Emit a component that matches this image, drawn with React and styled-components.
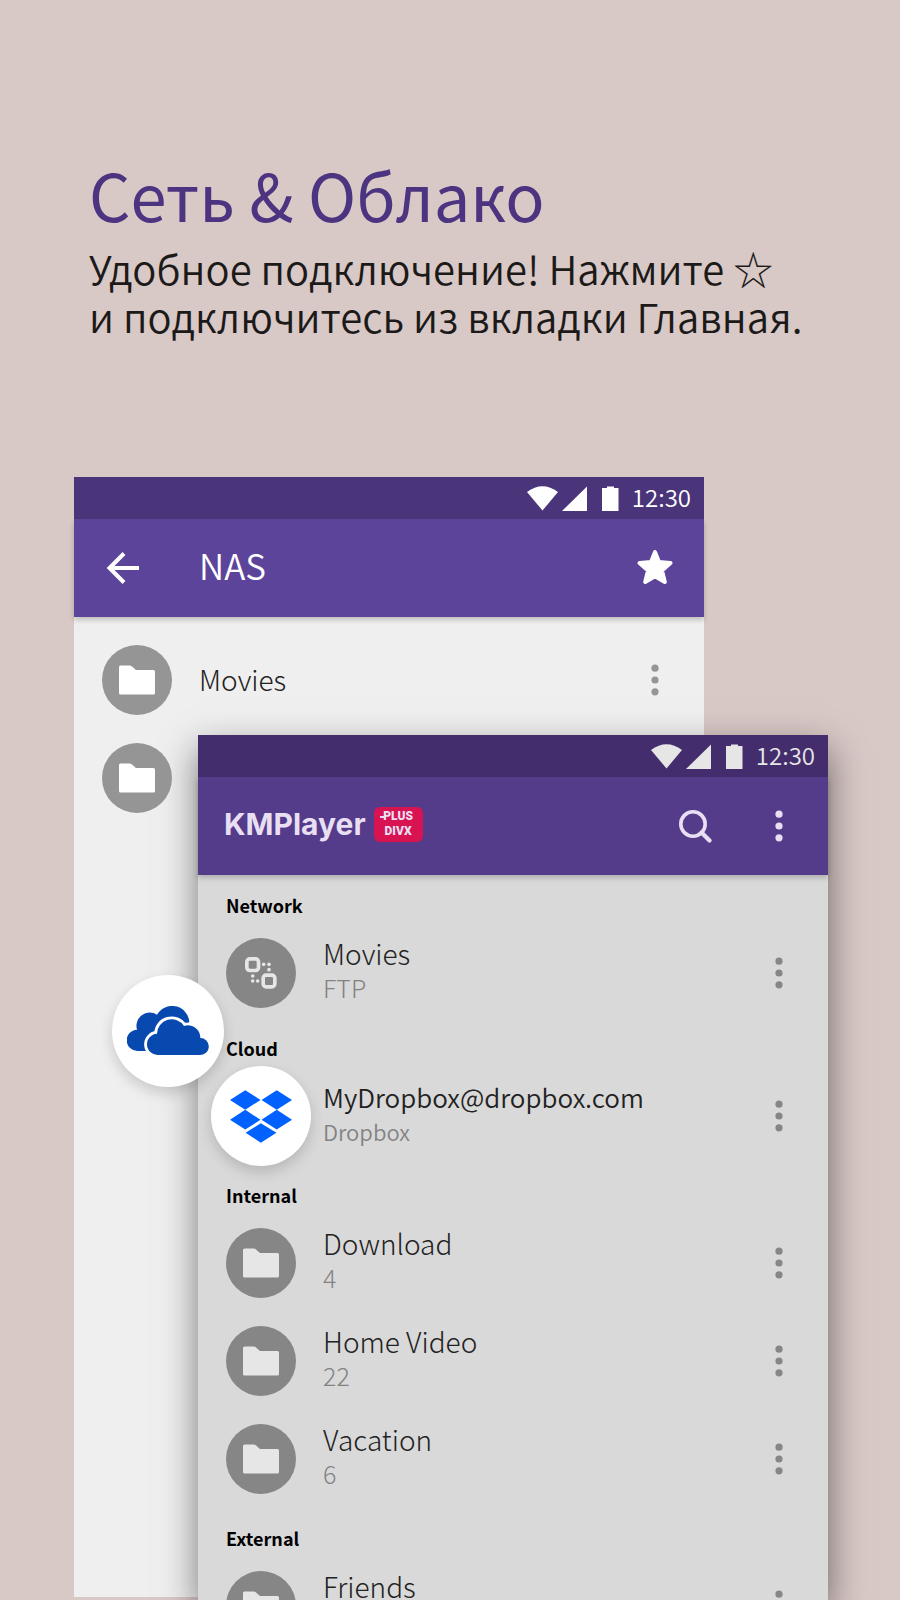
import styled, { createGlobalStyle, ThemeProvider } from "styled-components";

const App = () => {
  return (
    <>
      <GlobalStyle />
      <Page>
        <Intro>
          <h1>Сеть &amp; Облако</h1>
          <p>
            Удобное подключение! Нажмите ☆
            <br />
            и подключитесь из вкладки Главная.
          </p>
        </Intro>
        <Stage>
          <ThemeProvider theme={light}>
            <BackScreen>
              <StatusBar />
              <AppBar>
                <IconButton aria-label="Back">
                  <BackIcon />
                </IconButton>
                <h2>NAS</h2>
                <IconButton aria-label="Favorite">
                  <StarIcon />
                </IconButton>
              </AppBar>
              <NasList>
                <ListItem name="Movies" icon={<FolderIcon />} />
                <ListItem name="" icon={<FolderIcon />} />
              </NasList>
            </BackScreen>
          </ThemeProvider>
          <ThemeProvider theme={dim}>
            <FrontScreen>
              <StatusBar />
              <AppBar>
                <Brand>
                  KMPlayer
                  <Badge>
                    <span>PLUS</span>
                    <span>DIVX</span>
                  </Badge>
                </Brand>
                <IconButton aria-label="Search">
                  <SearchIcon />
                </IconButton>
                <IconButton aria-label="More">
                  <MoreIcon />
                </IconButton>
              </AppBar>
              <Section>
                <h3>Network</h3>
                <ul>
                  <ListItem name="Movies" info="FTP" icon={<NetworkIcon />} />
                </ul>
              </Section>
              <Section $dense>
                <OneDrive>
                  <OneDriveIcon />
                </OneDrive>
                <h3>Cloud</h3>
                <ul>
                  <ListItem
                    name="MyDropbox@dropbox.com"
                    info="Dropbox"
                    icon={<DropboxIcon />}
                    raised
                  />
                </ul>
              </Section>
              <Section>
                <h3>Internal</h3>
                <ul>
                  {internal.map((folder) => (
                    <ListItem
                      key={folder.name}
                      name={folder.name}
                      info={folder.count}
                      icon={<FolderIcon />}
                    />
                  ))}
                </ul>
              </Section>
              <Section>
                <h3>External</h3>
                <ul>
                  <ListItem name="Friends" icon={<FolderIcon />} info=" " />
                </ul>
              </Section>
            </FrontScreen>
          </ThemeProvider>
        </Stage>
      </Page>
    </>
  );
};

const internal = [
  { name: "Download", count: "4" },
  { name: "Home Video", count: "22" },
  { name: "Vacation", count: "6" },
];

const light = {
  status: "#4a347a",
  bar: "#5c449b",
  body: "#efefef",
  icon: "#ffffff",
  brand: "#ffffff",
  muted: "#959595",
};

const dim = {
  status: "#432d6d",
  bar: "#543c8b",
  body: "#d9d9d9",
  icon: "#e6e6e6",
  brand: "#e8dff2",
  muted: "#868686",
};

const StatusBar = () => (
  <StyledStatus>
    <svg width="92" height="25" viewBox="0 0 92 25" fill="currentColor">
      <path d="M0 6Q15.500-5.500 31 6L15.500 24.500Z" />
      <path d="M60 0.500V25H35Z" />
      <path d="M80 0.500h7v1.500h4.500v23h-16.500v-23h5z" />
    </svg>
    <time>12:30</time>
  </StyledStatus>
);

const ListItem = ({ name, info, icon, raised }) => (
  <Row>
    <Avatar>{raised ? <Raised>{icon}</Raised> : icon}</Avatar>
    <Label $small={raised} $single={!info}>
      <strong>{name}</strong>
      {info && <span>{info}</span>}
    </Label>
    <IconButton $muted aria-label="Options">
      <MoreIcon />
    </IconButton>
  </Row>
);

const BackIcon = () => (
  <svg width="34" height="34" viewBox="0 0 34 34">
    <path
      d="M33 17H4M18 2.500L3.500 17L18 31.500"
      fill="none"
      stroke="currentColor"
      strokeWidth="4"
    />
  </svg>
);

const StarIcon = () => (
  <svg width="36" height="36" viewBox="0 0 36 36">
    <path
      d="M18 2L22 12L33.500 13L25 20.500L27.800 32L18 26.200L8.200 32L11 20.500L2.500 13L14 12Z"
      fill="currentColor"
      stroke="currentColor"
      strokeWidth="4"
      strokeLinejoin="round"
    />
  </svg>
);

const SearchIcon = () => (
  <svg width="34" height="34" viewBox="0 0 34 34">
    <g fill="none" stroke="currentColor" strokeWidth="3.600">
      <circle cx="15" cy="15" r="12.200" />
      <path d="M23.500 23.500L31.500 31.500" strokeWidth="4.200" strokeLinecap="round" />
    </g>
  </svg>
);

const MoreIcon = () => (
  <svg width="8" height="32" viewBox="0 0 8 32" fill="currentColor">
    <circle cx="4" cy="4.200" r="3.600" />
    <circle cx="4" cy="16" r="3.600" />
    <circle cx="4" cy="27.800" r="3.600" />
  </svg>
);

const FolderIcon = () => (
  <svg width="36" height="30" viewBox="0 0 36 30" fill="currentColor">
    <path d="M1.500 0.500H10.500Q12 0.500 13 1.500L17 5H34.500Q36 5 36 6.500V28Q36 29.500 34.500 29.500H1.500Q0 29.500 0 28V2Q0 0.500 1.500 0.500Z" />
  </svg>
);

const NetworkIcon = () => (
  <svg width="32" height="32" viewBox="0 0 96 96">
    <g fill="none" stroke="currentColor" strokeWidth="11">
      <rect x="5.500" y="5.500" width="35" height="35" rx="9" />
      <rect x="54.500" y="54.500" width="35" height="35" rx="9" />
    </g>
    <g fill="currentColor">
      <circle cx="56" cy="22" r="5.500" />
      <circle cx="72" cy="22" r="5.500" />
      <circle cx="72" cy="38" r="5.500" />
      <circle cx="23" cy="57" r="5.500" />
      <circle cx="23" cy="72" r="5.500" />
      <circle cx="38" cy="72" r="5.500" />
    </g>
  </svg>
);

const OneDriveIcon = () => (
  <svg width="82" height="50" viewBox="0 0 246 150" fill="#0849b0">
    <path d="M62 135H32A32 32 0 0 1 30 71A40 40 0 0 1 90 26A52 52 0 0 1 187 48L150 100Z" />
    <path
      d="M94 147A31 31 0 0 1 90 83A44 44 0 0 1 171 60A37 37 0 0 1 220 96A25.500 25.500 0 0 1 220 147Z"
      stroke="#fff"
      strokeWidth="17"
    />
    <path d="M94 147A31 31 0 0 1 90 83A44 44 0 0 1 171 60A37 37 0 0 1 220 96A25.500 25.500 0 0 1 220 147Z" />
  </svg>
);

const DropboxIcon = () => (
  <svg width="62" height="53" viewBox="0 0 187 158" fill="#0061fe">
    <path d="M46 0L92 29L46 59L0 29Z" />
    <path d="M141 0L187 29L141 59L95 29Z" />
    <path d="M46 59L92 89L46 118L0 89Z" />
    <path d="M141 59L187 89L141 118L95 89Z" />
    <path d="M93 99L140 128L93 158L47 128Z" />
  </svg>
);

const GlobalStyle = createGlobalStyle`
  * {
    margin: 0;
    padding: 0;
    box-sizing: border-box;
  }
  body {
    background: #d8c8c6;
    font-family: "Noto Sans CJK SC", "Noto Sans", sans-serif;
  }
  ul {
    list-style: none;
  }
  svg {
    display: block;
    flex: none;
  }
`;

const Page = styled.main`
  display: flex;
  flex-direction: column;
  height: 100vh;
  overflow: hidden;
`;

const Intro = styled.header`
  padding: 146px 0 137px 89px;
  h1 {
    color: #4c3480;
    font-size: 65px;
    font-weight: 400;
    line-height: 96px;
  }
  p {
    padding-top: 2px;
    color: #1c1a19;
    font-size: 40px;
    font-weight: 350;
    line-height: 48px;
  }
`;

const Stage = styled.div`
  flex: 1;
  min-height: 0;
  display: grid;
  grid-template-rows: minmax(0, 1fr);
`;

const Screen = styled.section`
  grid-area: 1 / 1;
  background: ${({ theme }) => theme.body};
`;

const BackScreen = styled(Screen)`
  margin: 0 196px 3px 74px;
`;

const FrontScreen = styled(Screen)`
  margin: 258px 72px 0 198px;
  box-shadow: 0 14px 34px rgba(0, 0, 0, 0.5);
`;

const StyledStatus = styled.div`
  display: flex;
  align-items: center;
  justify-content: flex-end;
  gap: 13px;
  height: 42px;
  padding-right: 13px;
  background: ${({ theme }) => theme.status};
  color: ${({ theme }) => theme.icon};
  time {
    padding-bottom: 2px;
    font-size: 24px;
    font-weight: 350;
    line-height: 40px;
  }
`;

const AppBar = styled.div`
  position: relative;
  display: flex;
  align-items: center;
  gap: 28px;
  height: 98px;
  padding: 0 21px;
  background: ${({ theme }) => theme.bar};
  color: ${({ theme }) => theme.brand};
  box-shadow: 0 3px 5px rgba(0, 0, 0, 0.2);
  h2 {
    flex: 1;
    padding: 0 0 6px 20px;
    font-size: 35px;
    font-weight: 350;
    line-height: 48px;
  }
`;

const IconButton = styled.button`
  display: flex;
  align-items: center;
  justify-content: center;
  flex: none;
  width: 56px;
  height: 56px;
  border: none;
  background: none;
  color: ${({ theme, $muted }) => ($muted ? theme.muted : "inherit")};
  cursor: pointer;
`;

const NasList = styled.ul`
  padding-top: 14px;
`;

const Brand = styled.div`
  flex: 1;
  display: flex;
  align-items: center;
  gap: 8px;
  padding: 0 0 4px 5px;
  font-family: Inter, sans-serif;
  font-size: 30px;
  font-weight: 700;
  line-height: 36px;
`;

const Badge = styled.span`
  display: flex;
  flex-direction: column;
  align-items: center;
  justify-content: center;
  width: 49px;
  height: 35px;
  border-radius: 6px;
  background: #d81352;
  font-family: Roboto, sans-serif;
  font-size: 12px;
  font-weight: 900;
  line-height: 15px;
  span:first-child {
    position: relative;
  }
  span:first-child::before {
    content: "";
    position: absolute;
    top: 7px;
    left: -3px;
    width: 5px;
    height: 2px;
    background: currentColor;
  }
`;

const Section = styled.section`
  position: relative;
  h3 {
    padding: ${({ $dense }) => ($dense ? "8px" : "12px")} 28px 1px;
    color: #000;
    font-size: 18px;
    font-weight: 700;
    line-height: 36px;
  }
`;

const Row = styled.li`
  display: flex;
  align-items: center;
  gap: 27px;
  height: 98px;
  padding: 0 21px 0 28px;
`;

const Avatar = styled.div`
  position: relative;
  display: flex;
  align-items: center;
  justify-content: center;
  flex: none;
  width: 70px;
  height: 70px;
  border-radius: 50%;
  background: ${({ theme }) => theme.muted};
  color: ${({ theme }) => theme.icon};
`;

const Bubble = styled.div`
  position: absolute;
  display: flex;
  align-items: center;
  justify-content: center;
  border-radius: 50%;
  background: #fff;
  box-shadow: 0 6px 14px rgba(0, 0, 0, 0.16);
`;

const Raised = styled(Bubble)`
  inset: -15px;
`;

const OneDrive = styled(Bubble)`
  top: -47px;
  left: -86px;
  width: 112px;
  height: 112px;
`;

const Label = styled.div`
  flex: 1;
  min-width: 0;
  padding-bottom: ${({ $single, $small }) => ($single ? "2px" : $small ? "6px" : "8px")};
  strong {
    display: block;
    color: #222;
    font-size: ${({ $small }) => ($small ? "26px" : "28px")};
    font-weight: ${({ $small }) => ($small ? 350 : 300)};
    line-height: 36px;
  }
  span {
    display: block;
    color: #838383;
    font-size: ${({ $small }) => ($small ? "22px" : "25px")};
    font-weight: ${({ $small }) => ($small ? 350 : 300)};
    line-height: 32px;
    white-space: pre;
  }
`;

export default App;
